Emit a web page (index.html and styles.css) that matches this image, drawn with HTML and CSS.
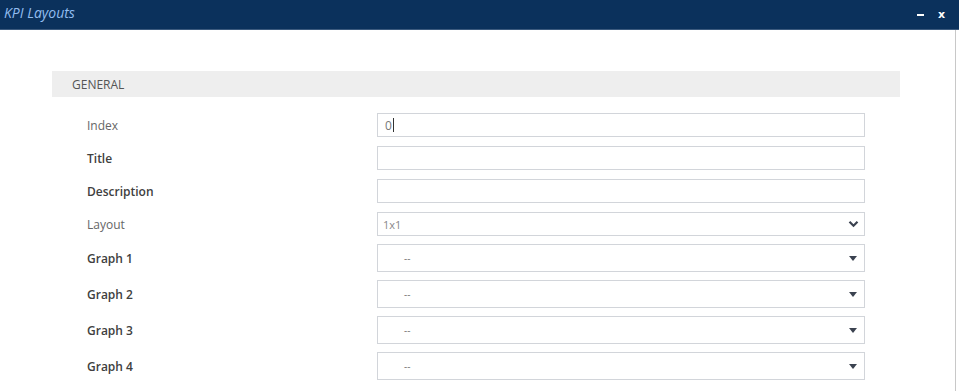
FILE: index.html
```html
<!DOCTYPE html>
<html lang="en">
<head>
    <meta charset="UTF-8">
    <title>KPI Layouts</title>
    <link rel="stylesheet" href="styles.css">
</head>
<body>
    <div class="window-bar">
        <span class="window-title">KPI Layouts</span>
        <div class="window-buttons">
            <span class="btn-min"></span>
            <span class="btn-close">x</span>
        </div>
    </div>

    <div class="content">
        <div class="section-head">GENERAL</div>

        <div class="form">
            <div class="row">
                <label class="lbl light">Index</label>
                <div class="field">0<span class="caret"></span></div>
            </div>
            <div class="row">
                <label class="lbl">Title</label>
                <div class="field"></div>
            </div>
            <div class="row">
                <label class="lbl">Description</label>
                <div class="field"></div>
            </div>
            <div class="row">
                <label class="lbl light">Layout</label>
                <div class="field select">
                    <span class="val">1x1</span>
                    <svg class="chev" width="11" height="8" viewBox="0 0 11 8">
                        <path d="M1.5 1.8 L5.5 5.8 L9.5 1.8" fill="none" stroke="#3b4250" stroke-width="2.2"/>
                    </svg>
                </div>
            </div>
            <div class="row tall">
                <label class="lbl">Graph 1</label>
                <div class="field select big">
                    <span class="val dash">--</span>
                    <span class="tri"></span>
                </div>
            </div>
            <div class="row tall">
                <label class="lbl">Graph 2</label>
                <div class="field select big">
                    <span class="val dash">--</span>
                    <span class="tri"></span>
                </div>
            </div>
            <div class="row tall">
                <label class="lbl">Graph 3</label>
                <div class="field select big">
                    <span class="val dash">--</span>
                    <span class="tri"></span>
                </div>
            </div>
            <div class="row tall">
                <label class="lbl">Graph 4</label>
                <div class="field select big">
                    <span class="val dash">--</span>
                    <span class="tri"></span>
                </div>
            </div>
        </div>
    </div>
</body>
</html>
```

FILE: styles.css
```css
body {
    margin: 0;
    font-family: 'Open Sans', 'Noto Sans', sans-serif;
    background-color: #ffffff;
    color: #333;
    height: 391px;
    overflow: hidden;
}

.window-bar {
    height: 29px;
    background-color: #0b315c;
    border-bottom: 1px solid #3c5a7e;
    display: flex;
    justify-content: space-between;
    align-items: center;
}

.window-title {
    font-style: italic;
    font-size: 14px;
    color: #92bdf0;
    padding-left: 4px;
    margin-top: -5px;
}

.window-buttons {
    display: flex;
    align-items: center;
    padding-right: 14px;
}

.btn-min {
    width: 7px;
    height: 2px;
    background-color: #ffffff;
    margin-right: 14px;
    margin-top: 1px;
}

.btn-close {
    color: #ffffff;
    font-weight: bold;
    font-size: 11px;
    font-family: 'DejaVu Sans', sans-serif;
    margin-top: -1px;
}

.content {
    border-right: 1px solid #c8c8c8;
    width: 956px;
    height: 361px;
    padding-top: 41px;
    box-sizing: border-box;
}

.section-head {
    margin-left: 52px;
    width: 848px;
    height: 26px;
    background-color: #eeeeee;
    font-size: 12px;
    color: #555;
    padding-left: 20px;
    box-sizing: border-box;
    line-height: 27px;
}

.form {
    margin-left: 87px;
    padding-top: 16px;
}

.row {
    display: flex;
    align-items: center;
    height: 24px;
    margin-bottom: 9px;
}

.row.tall {
    height: 28px;
    margin-bottom: 8px;
}

.row:nth-child(4) {
    margin-bottom: 8px;
}

.lbl {
    width: 290px;
    font-size: 12px;
    font-weight: 600;
    color: #404040;
}

.lbl.light {
    font-weight: normal;
    color: #666;
}

.field {
    width: 488px;
    height: 24px;
    border: 1px solid #d2d5da;
    box-sizing: border-box;
    font-size: 12px;
    color: #777;
    padding-left: 7px;
    display: flex;
    align-items: center;
}

.field.big {
    height: 28px;
}

.caret {
    width: 1px;
    height: 14px;
    background-color: #333;
    margin-left: 1px;
}

.select {
    justify-content: space-between;
    padding-left: 5px;
    padding-right: 5px;
}

.val {
    font-size: 11px;
    color: #888;
}

.val.dash {
    margin-left: 21px;
    font-size: 10px;
    color: #777;
}

.tri {
    width: 0;
    height: 0;
    border-left: 4px solid transparent;
    border-right: 4px solid transparent;
    border-top: 5px solid #3b4250;
    margin-right: 2px;
}
```
